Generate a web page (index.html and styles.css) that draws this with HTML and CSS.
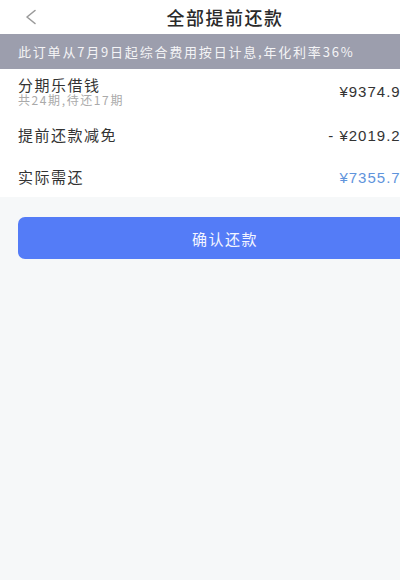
FILE: index.html
```html
<!DOCTYPE html>
<html lang="zh">
<head>
<meta charset="utf-8">
<link rel="stylesheet" href="styles.css">
</head>
<body>
<div class="page">
  <header class="nav">
    <span class="back">
      <svg width="14" height="16" viewBox="0 0 14 16"><path d="M11 1.5 L3 8 L11 14.5" fill="none" stroke="#9a9a9a" stroke-width="1.6" stroke-linecap="round" stroke-linejoin="round"/></svg>
    </span>
    <h1 class="title">全部提前还款</h1>
  </header>
  <div class="notice">此订单从7月9日起综合费用按日计息,年化利率36%</div>
  <section class="list">
    <div class="row row-first">
      <div class="label">
        <div class="name">分期乐借钱</div>
        <div class="sub">共24期,待还17期</div>
      </div>
      <div class="amount">¥9374.96</div>
    </div>
    <div class="row">
      <div class="name">提前还款减免</div>
      <div class="amount">- ¥2019.22</div>
    </div>
    <div class="row row-last">
      <div class="name">实际需还</div>
      <div class="amount blue">¥7355.74</div>
    </div>
  </section>
  <div class="actions">
    <button class="confirm">确认还款</button>
  </div>
</div>
</body>
</html>
```
FILE: styles.css
```css
html, body {
  margin: 0;
  padding: 0;
  overflow: hidden;
  background: #f6f8f9;
}
body {
  width: 400px;
  height: 580px;
  font-family: "Noto Sans CJK SC", "Noto Sans", sans-serif;
  color: #333;
}
.page {
  width: 450px;
}
.nav {
  height: 34px;
  background: #fff;
  display: flex;
  align-items: center;
  justify-content: center;
  position: relative;
}
.back {
  position: absolute;
  left: 24px;
  top: 9px;
  display: flex;
}
.title {
  margin: 0;
  font-size: 18px;
  font-weight: 500;
  letter-spacing: 1.5px;
  color: #2a2a2a;
  line-height: 34px;
}
.notice {
  height: 35px;
  background: #9c9ead;
  color: #f4f4f6;
  font-size: 13px;
  letter-spacing: 1.8px;
  display: flex;
  align-items: center;
  padding-left: 18px;
}
.list {
  background: #fff;
}
.row {
  display: flex;
  align-items: center;
  justify-content: space-between;
  padding: 0 40px 0 18px;
  height: 44px;
}
.row-last {
  height: 40px;
}
.label {
  display: flex;
  flex-direction: column;
  gap: 1px;
}
.name {
  font-size: 15px;
  letter-spacing: 1.5px;
  color: #333;
  line-height: 16px;
}
.sub {
  font-size: 12px;
  color: #aaa;
  letter-spacing: 1.6px;
  line-height: 12px;
}
.amount {
  font-family: "Liberation Sans", Arial, sans-serif;
  font-size: 15px;
  letter-spacing: 1px;
  color: #333;
}
.amount.blue {
  color: #5f94dc;
}
.actions {
  padding: 20px 18px;
}
.confirm {
  display: block;
  width: 100%;
  height: 42px;
  border: none;
  border-radius: 7px;
  background: #547cf7;
  color: #f4f6ff;
  font-family: "Noto Sans CJK SC", "Noto Sans", sans-serif;
  font-size: 15px;
  letter-spacing: 1.5px;
}
```
